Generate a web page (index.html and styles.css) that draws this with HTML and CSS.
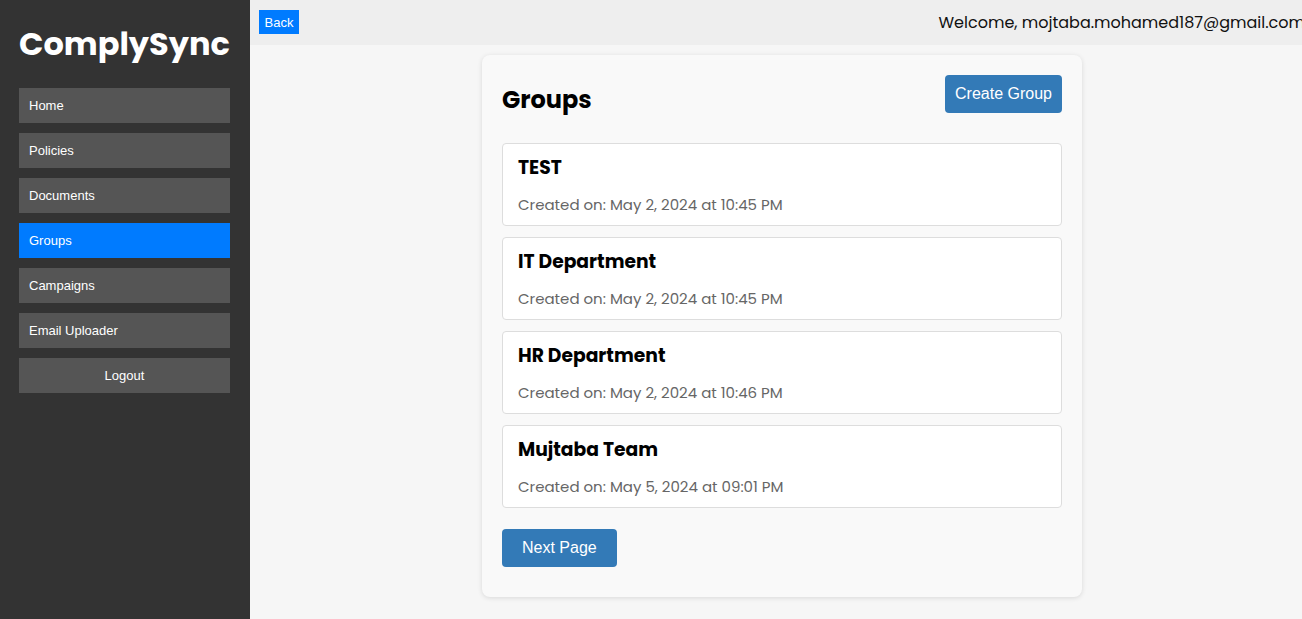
FILE: index.html
```html
<!DOCTYPE html>
<html lang="en">
<head>
<meta charset="utf-8">
<title>ComplySync - Groups</title>
<link rel="stylesheet" href="styles.css">
</head>
<body>
<div class="layout">
  <aside class="sidebar">
    <h1 class="brand">ComplySync</h1>
    <nav class="nav">
      <a class="nav-item" href="#">Home</a>
      <a class="nav-item" href="#">Policies</a>
      <a class="nav-item" href="#">Documents</a>
      <a class="nav-item active" href="#">Groups</a>
      <a class="nav-item" href="#">Campaigns</a>
      <a class="nav-item" href="#">Email Uploader</a>
      <button class="nav-item logout">Logout</button>
    </nav>
  </aside>
  <div class="main">
    <header class="topbar">
      <button class="back-btn">Back</button>
      <span class="welcome">Welcome, mojtaba.mohamed187@gmail.com</span>
    </header>
    <div class="content">
      <section class="card">
        <div class="card-head">
          <h2 class="card-title">Groups</h2>
          <button class="btn">Create Group</button>
        </div>
        <ul class="group-list">
          <li class="group">
            <h3 class="group-name">TEST</h3>
            <p class="group-date">Created on: May 2, 2024 at 10:45 PM</p>
          </li>
          <li class="group">
            <h3 class="group-name">IT Department</h3>
            <p class="group-date">Created on: May 2, 2024 at 10:45 PM</p>
          </li>
          <li class="group">
            <h3 class="group-name">HR Department</h3>
            <p class="group-date">Created on: May 2, 2024 at 10:46 PM</p>
          </li>
          <li class="group">
            <h3 class="group-name">Mujtaba Team</h3>
            <p class="group-date">Created on: May 5, 2024 at 09:01 PM</p>
          </li>
        </ul>
        <button class="btn next">Next Page</button>
      </section>
    </div>
  </div>
</div>
</body>
</html>
```
FILE: styles.css
```css
* { box-sizing: border-box; }
html, body {
  margin: 0;
  padding: 0;
  height: 100%;
}
body {
  font-family: "Poppins", "Open Sans", "Noto Sans", sans-serif;
  background: #f6f6f6;
  overflow: hidden;
}
.layout {
  display: flex;
  height: 619px;
}
.sidebar {
  width: 250px;
  flex: none;
  background: #333;
  padding: 19px 20px 0 19px;
}
.brand {
  margin: 0 0 19px;
  color: #fff;
  font-size: 32px;
  line-height: 50px;
  font-weight: 700;
  text-align: center;
}
.nav {
  display: flex;
  flex-direction: column;
  gap: 10px;
}
.nav-item {
  display: block;
  height: 35px;
  line-height: 35px;
  padding: 0 10px;
  background: #555;
  color: #fff;
  text-decoration: none;
  font-family: "Liberation Sans", Arial, sans-serif;
  font-size: 13px;
  border: 0;
  text-align: left;
}
.nav-item.active { background: #007bff; }
.logout { text-align: center; width: 100%; }
.main {
  flex: 1;
  min-width: 0;
  display: flex;
  flex-direction: column;
}
.topbar {
  height: 45px;
  background: #eee;
  display: flex;
  align-items: center;
  padding: 0 0 0 9px;
  overflow: hidden;
}
.back-btn {
  background: #007bff;
  color: #fff;
  border: 0;
  width: 40px;
  height: 24px;
  padding: 0;
  margin-bottom: 1px;
  font-family: "Liberation Sans", Arial, sans-serif;
  font-size: 13px;
}
.welcome {
  margin-left: auto;
  margin-right: -3px;
  white-space: nowrap;
  font-size: 16px;
  color: #111;
}
.content {
  flex: 1;
  padding: 10px 0 0 12px;
}
.card {
  width: 600px;
  margin: 0 auto;
  background: #f9f9f9;
  border-radius: 8px;
  box-shadow: 0 1px 5px rgba(0,0,0,0.12);
  padding: 20px 20px 30px;
}
.card-head {
  display: flex;
  justify-content: space-between;
  align-items: flex-start;
  margin-bottom: 30px;
}
.card-title {
  margin: 12px 0 0;
  font-size: 24px;
  line-height: 26px;
  font-weight: 700;
  color: #000;
}
.btn {
  background: #337ab7;
  color: #fff;
  border: 0;
  border-radius: 4px;
  height: 38px;
  padding: 0 10px;
  font-family: "Liberation Sans", Arial, sans-serif;
  font-size: 16px;
}
.group-list {
  list-style: none;
  margin: 0 0 21px;
  padding: 0;
  display: flex;
  flex-direction: column;
  gap: 11px;
}
.group {
  height: 83px;
  background: #fff;
  border: 1px solid #ddd;
  border-radius: 4px;
  padding: 12px 15px;
}
.group-name {
  margin: 0 0 15px;
  font-size: 18.72px;
  line-height: 24px;
  font-weight: 700;
  color: #000;
}
.group-date {
  margin: 0;
  font-size: 15px;
  line-height: 20px;
  color: #666;
}
.next { padding: 0 20px; }
```
